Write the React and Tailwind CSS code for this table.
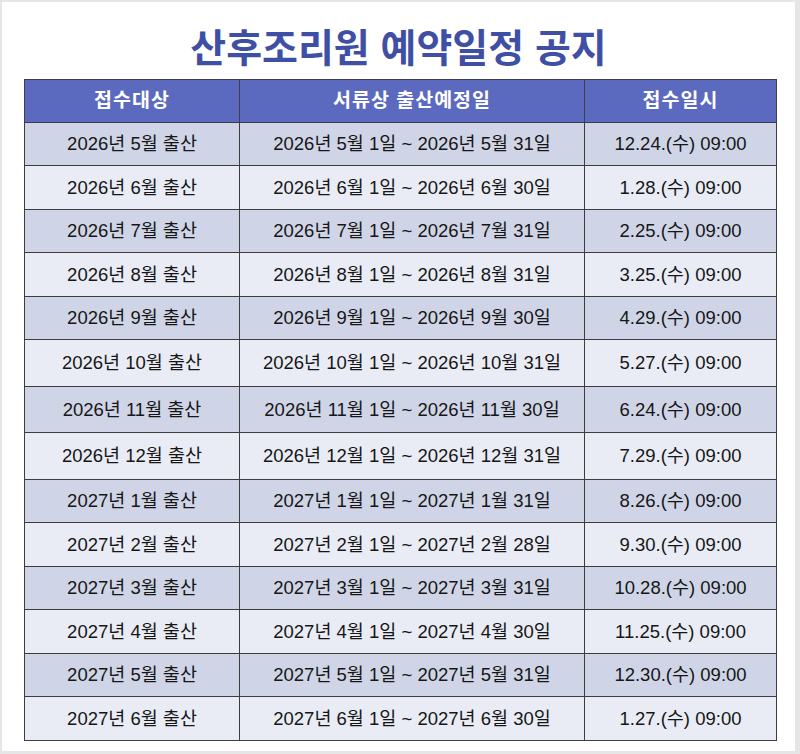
import React from 'react';

const rows = [
    { target: '2026년 5월 출산', range: '2026년 5월 1일 ~ 2026년 5월 31일', date: '12.24.(수) 09:00', h: 'h-[43px]' },
    { target: '2026년 6월 출산', range: '2026년 6월 1일 ~ 2026년 6월 30일', date: '1.28.(수) 09:00', h: 'h-[44px]' },
    { target: '2026년 7월 출산', range: '2026년 7월 1일 ~ 2026년 7월 31일', date: '2.25.(수) 09:00', h: 'h-[43px]' },
    { target: '2026년 8월 출산', range: '2026년 8월 1일 ~ 2026년 8월 31일', date: '3.25.(수) 09:00', h: 'h-[44px]' },
    { target: '2026년 9월 출산', range: '2026년 9월 1일 ~ 2026년 9월 30일', date: '4.29.(수) 09:00', h: 'h-[43px]' },
    { target: '2026년 10월 출산', range: '2026년 10월 1일 ~ 2026년 10월 31일', date: '5.27.(수) 09:00', h: 'h-[47px]' },
    { target: '2026년 11월 출산', range: '2026년 11월 1일 ~ 2026년 11월 30일', date: '6.24.(수) 09:00', h: 'h-[46px]' },
    { target: '2026년 12월 출산', range: '2026년 12월 1일 ~ 2026년 12월 31일', date: '7.29.(수) 09:00', h: 'h-[47px]' },
    { target: '2027년 1월 출산', range: '2027년 1월 1일 ~ 2027년 1월 31일', date: '8.26.(수) 09:00', h: 'h-[43px]' },
    { target: '2027년 2월 출산', range: '2027년 2월 1일 ~ 2027년 2월 28일', date: '9.30.(수) 09:00', h: 'h-[44px]' },
    { target: '2027년 3월 출산', range: '2027년 3월 1일 ~ 2027년 3월 31일', date: '10.28.(수) 09:00', h: 'h-[43px]' },
    { target: '2027년 4월 출산', range: '2027년 4월 1일 ~ 2027년 4월 30일', date: '11.25.(수) 09:00', h: 'h-[44px]' },
    { target: '2027년 5월 출산', range: '2027년 5월 1일 ~ 2027년 5월 31일', date: '12.30.(수) 09:00', h: 'h-[43px]' },
    { target: '2027년 6월 출산', range: '2027년 6월 1일 ~ 2027년 6월 30일', date: '1.27.(수) 09:00', h: 'h-[44px]' },
];

const font = { fontFamily: '"Liberation Sans", "Noto Sans CJK KR", sans-serif' };

const App = () => {
    return (
        <div className="w-[800px] h-[754px] bg-[#e6e6e6] pl-[2px] pt-[2px] pr-[5px] pb-[3px]" style={font}>
            <div className="h-full bg-white flex flex-col">
                {/* Title */}
                <div className="h-[77px] flex items-center justify-center pt-[15px]">
                    <h1 className="text-[39px] font-bold text-[#3f50a4] leading-none">
                        산후조리원 예약일정 공지
                    </h1>
                </div>

                {/* Schedule table */}
                <div className="pl-[22px]">
                    <table className="w-[752px] table-fixed border-collapse border border-[#3d3d3d] text-[18.5px] text-[#161616] text-center">
                        <colgroup>
                            <col className="w-[215px]" />
                            <col className="w-[345px]" />
                            <col className="w-[192px]" />
                        </colgroup>
                        <thead>
                            <tr className="h-[43px] bg-[#5b6abf] text-white font-bold text-[19.5px]">
                                <th className="border border-[#3d3d4d] font-bold tracking-[1px]">접수대상</th>
                                <th className="border border-[#3d3d4d] font-bold tracking-[1px]">서류상 출산예정일</th>
                                <th className="border border-[#3d3d4d] font-bold tracking-[1px]">접수일시</th>
                            </tr>
                        </thead>
                        <tbody>
                            {rows.map((row, i) => (
                                <tr key={i} className={`${row.h} ${i % 2 === 0 ? 'bg-[#cfd5e6]' : 'bg-[#e9ecf4]'}`}>
                                    <td className="border border-[#3d3d3d] p-0">{row.target}</td>
                                    <td className="border border-[#3d3d3d] p-0">{row.range}</td>
                                    <td className="border border-[#3d3d3d] p-0">{row.date}</td>
                                </tr>
                            ))}
                        </tbody>
                    </table>
                </div>
            </div>
        </div>
    );
};

export default App;
